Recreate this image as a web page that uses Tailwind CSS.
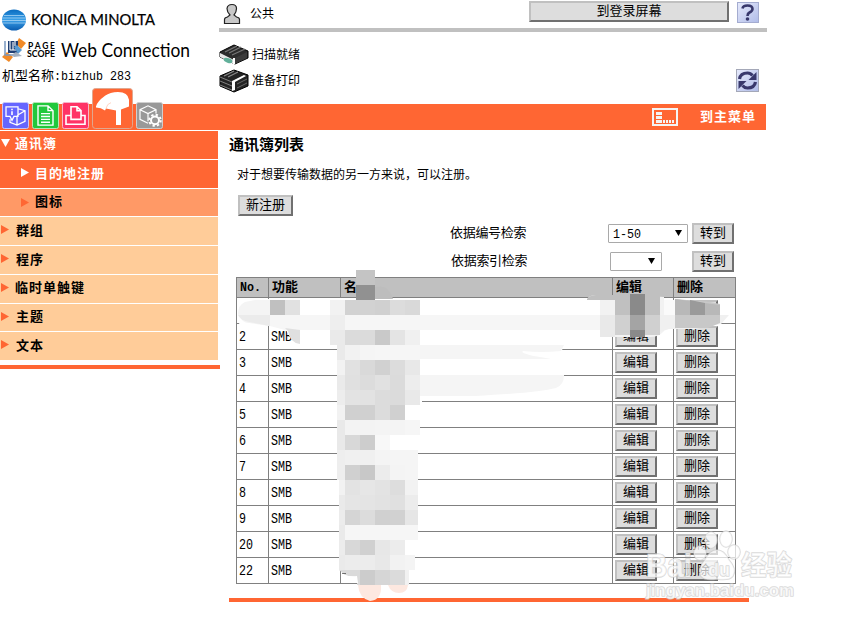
<!DOCTYPE html>
<html lang="zh-CN">
<head>
    <meta charset="UTF-8">
    <meta name="viewport" content="width=device-width, initial-scale=1.0">
    <title>PageScope Web Connection</title>
    <script src="https://cdn.jsdelivr.net/npm/@tailwindcss/browser@4"></script>
</head>
<body class="bg-white text-black font-['Liberation_Mono','Noto_Sans_CJK_SC',monospace] text-[13px] leading-4">
    <div class="relative w-[841px] h-[620px] overflow-hidden">
        <!-- Header -->
        <header class="flex h-[104px] w-[767px]">
            <div class="w-[219px] shrink-0 pt-2">
                <svg class="block" width="219" height="58" viewBox="0 8 219 58">
                    <defs>
                        <linearGradient id="globe" x1="0" y1="0" x2="0" y2="1">
                            <stop offset="0" stop-color="#0a6cc0"/>
                            <stop offset=".5" stop-color="#3aa0e8"/>
                            <stop offset="1" stop-color="#0a5cb0"/>
                        </linearGradient>
                    </defs>
                    <ellipse cx="14" cy="20" rx="12" ry="10.500" fill="url(#globe)"/>
                    <path d="M4 15.500h20M2.500 18h23M2 20.500h24M3 23h22" stroke="#a8d4f4" stroke-width=".8"/>
                    <text x="31" y="25" textLength="124" lengthAdjust="spacingAndGlyphs" font-family="Lato" font-weight="400" font-size="14.500" stroke="#000" stroke-width=".25">KONICA MINOLTA</text>
                    <!-- PageScope mark -->
                    <path d="M19 38l7 5-5 6-5-5z" fill="#f08a28"/>
                    <path d="M2 57l5-5 6 5-4 5z" fill="#f08a28"/>
                    <path d="M5 41v14h13" stroke="#7898c0" stroke-width="1.500" fill="none"/>
                    <path d="M8 41h10v12H8z" fill="#1f3f74"/>
                    <path d="M10 41v9M13 42v8M10 50h6M15 41v5" stroke="#fff" stroke-width="1.100"/>
                    <path d="M14 47l3-2 5 5-4 4z" fill="#5a9ad0"/>
                    <path d="M11 55l5-3 6 4-8 1z" fill="#a4b0c0"/>
                    <text x="28" y="48.500" textLength="27" font-family="Lato" font-weight="700" font-size="8.500">PAGE</text>
                    <text x="27" y="57" textLength="28" lengthAdjust="spacingAndGlyphs" font-family="Lato" font-weight="700" font-size="9.500">SCOPE</text>
                    <text x="61" y="57" textLength="129" lengthAdjust="spacingAndGlyphs" font-family="Lato" font-size="20">Web Connection</text>
                </svg>
                <p class="pl-[2px] pt-[3px] whitespace-nowrap flex items-center"><span>机型名称</span><span class="text-[11.67px] scale-y-[1.15] whitespace-pre">:bizhub 283</span></p>
            </div>

            <div class="w-[548px]">
                <div class="flex h-8 border-b-4 border-[#c0c0c0] items-start">
                    <svg class="mt-[3px] ml-1 shrink-0" width="18" height="22" viewBox="0 0 18 22">
                        <path d="M1.500 20.500v-4q0-2 3-2.500l2.500-2Q4 9 4 5.500 4.500 1.500 9 1.500t4.500 4Q13.500 9 11 12l2.500 2q3 .5 3 2.500v4z" fill="#c8c8c8" stroke="#222" stroke-width="1.200"/>
                    </svg>
                    <p class="ml-[9px] mt-[7px] w-[279px] text-[12px]">公共</p>
                    <button class="w-[200px] h-[21px] mt-px bg-[#dddddd] border-2 border-t-[#c0c0c0] border-l-[#c0c0c0] border-r-[#707070] border-b-[#707070] leading-none">到登录屏幕</button>
                    <svg class="ml-2 mt-[2px] shrink-0" width="22" height="21" viewBox="0 0 22 21">
                        <defs>
                            <linearGradient id="tile" x1="0" y1="0" x2="1" y2="1">
                                <stop offset="0" stop-color="#e6eafc"/>
                                <stop offset="1" stop-color="#b0bce8"/>
                            </linearGradient>
                        </defs>
                        <rect x=".5" y=".5" width="21" height="20" fill="url(#tile)" stroke="#a4acd0"/>
                        <path d="M5.500 6.500Q6 3.500 10.500 3.500q5 0 5 3.500 0 2-3 3.500-2 1-2 3.500" fill="none" stroke="#38386c" stroke-width="2.600"/>
                        <circle cx="10.500" cy="17" r="1.800" fill="#38386c"/>
                    </svg>
                </div>
                <div class="flex justify-between">
                    <div class="pt-[10px] text-[12px]">
                        <div class="flex items-center h-[25px] gap-[3px]">
                            <svg width="30" height="22" viewBox="0 0 30 22">
                                <path d="M1 8L15 1l14 6v7L16 20 1 13z" fill="#2c2c2c" stroke="#000"/>
                                <path d="M6 8l12-6M10 9l12-6M13 11l13-6" stroke="#777" stroke-width="1.200"/>
                                <path d="M1 9l14 7v4L1 13z" fill="#e8e8e8"/>
                                <path d="M16 14l12-6v6l-12 6z" fill="#3a3a3a"/>
                                <path d="M15 14v6" stroke="#fff" stroke-width="2"/>
                                <ellipse cx="9" cy="16.500" rx="4.500" ry="2.300" fill="#62b09a" transform="rotate(18 9 16.500)"/>
                            </svg>
                            <span class="pt-[2px]">扫描就绪</span>
                        </div>
                        <div class="flex items-center h-[27px] gap-[3px]">
                            <svg width="30" height="24" viewBox="0 0 30 24">
                                <path d="M1 7L15 1l14 5v11L15 23 1 17z" fill="#242424" stroke="#000"/>
                                <path d="M5 7l10-5M9 8l10-5" stroke="#8a8a8a" stroke-width="1.200"/>
                                <path d="M1 8l12 5M1 12l12 5M1 16l12 5" stroke="#999" stroke-width=".8"/>
                                <path d="M13 22V12L25 6l2 1-11 6v8z" fill="#fff"/>
                                <path d="M18 15l10-5M18 19l10-5" stroke="#777" stroke-width=".8"/>
                            </svg>
                            <span class="pt-[2px]">准备打印</span>
                        </div>
                    </div>
                    <svg class="mt-[37px] mr-2" width="23" height="23" viewBox="0 0 23 23">
                        <rect x=".5" y=".5" width="22" height="22" fill="url(#tile)" stroke="#a4a8b8"/>
                        <path d="M3.500 10q1-6 8-6 3 0 5 2.500M19.500 13q-1 6-8 6-3 0-5-2.500" fill="none" stroke="#38386c" stroke-width="3.200"/>
                        <path d="M20.500 3v8h-8zM2.500 20v-8h8z" fill="#38386c"/>
                    </svg>
                </div>
            </div>
        </header>

        <!-- Tab strip -->
        <nav class="flex items-end h-[26px] w-[766px] bg-[#ff6633] pl-[2px] pb-px">
            <svg class="shrink-0 mr-[3px]" width="27" height="27" viewBox="0 0 27 28" preserveAspectRatio="none">
                <rect x=".5" y=".5" width="26" height="27" rx="2" fill="#6666ff" stroke="#c8c8f8"/>
                <path d="M4 5h12v10h-4l-2 4-2-4H4zM8 18v3l7 3 8-4V9l-7-2M15 24v-9M15 14l8-5" fill="none" stroke="#fff" stroke-width="1.300"/>
                <path d="M10 7v1.500M10 9.500v4" stroke="#fff" stroke-width="1.600"/>
            </svg>
            <svg class="shrink-0 mr-[3px]" width="27" height="27" viewBox="0 0 27 28" preserveAspectRatio="none">
                <rect x=".5" y=".5" width="26" height="27" rx="2" fill="#22c83c" stroke="#b8e8b8"/>
                <path d="M6 4h10l5 5v15H6zM16 4v5h5M9 12h9M9 15h9M9 18h9M9 21h9" fill="none" stroke="#fff" stroke-width="1.400"/>
            </svg>
            <svg class="shrink-0 mr-[3px]" width="27" height="27" viewBox="0 0 27 28" preserveAspectRatio="none">
                <rect x=".5" y=".5" width="26" height="27" rx="2" fill="#ff3366" stroke="#f8b8cc"/>
                <path d="M9 18V5h6l4 4v9zM15 5v4h4M9 14H4v9h19v-9h-4" fill="none" stroke="#fff" stroke-width="1.600"/>
            </svg>
            <svg class="shrink-0 mr-[3px]" width="41" height="41" viewBox="0 0 41 42" preserveAspectRatio="none">
                <rect x=".5" y=".5" width="40" height="41" rx="3" fill="#ff6633" stroke="#e0a890"/>
                <path d="M4 19Q5 14 13 8q5-4 13-4 10 0 11 8v7l-8 3v16h-5V23l-10-2-1 2q-4-3-9-3z" fill="#fff"/>
                <path d="M14 21q1-5 5-6" fill="none" stroke="#ffc8b4" stroke-width=".8"/>
            </svg>
            <svg class="shrink-0" width="27" height="27" viewBox="0 0 27 28" preserveAspectRatio="none">
                <rect x=".5" y=".5" width="26" height="27" rx="2" fill="#999999" stroke="#d0d0d0"/>
                <path d="M12 22l-8-4V8l8-4 8 4v4M4 8l8 4 8-4M12 12v8" fill="none" stroke="#fff" stroke-width="1.200"/>
                <circle cx="19" cy="19" r="5.800" fill="#999" stroke="#fff" stroke-width="2" stroke-dasharray="2.300 2.250"/>
                <circle cx="19" cy="19" r="4" fill="#999" stroke="#fff" stroke-width="2"/>
            </svg>
            <div class="ml-auto self-center flex items-center pr-[10px]">
                <svg width="26" height="18" viewBox="0 0 26 18">
                    <rect x="1" y="1" width="24" height="16" fill="none" stroke="#f4f4f4" stroke-width="2"/>
                    <path d="M4 4h6v3H4zM4 8h6v3H4zM4 12h6v3H4zM11 12h2v3h-2zM14 12h2v3h-2zM17 12h2v3h-2zM20 12h2v3h-2z" fill="#f4f4f4"/>
                </svg>
                <a class="ml-[22px] pt-[2px] text-white font-bold text-[13px] tracking-[1px] whitespace-nowrap">到主菜单</a>
            </div>
        </nav>

        <div class="flex">
            <!-- Side menu -->
            <aside class="w-[220px] shrink-0 pt-px">
                <ul class="w-[218px] font-bold tracking-[1px]">
                    <li class="flex items-center h-7 mb-px bg-[#ff6633] text-white pl-px"><svg class="mb-1" width="9" height="8"><path d="M0 0h9L4.500 8z" fill="#fff"/></svg><span class="ml-[5px]">通讯簿</span></li>
                    <li class="flex items-center h-7 mb-px bg-[#ff6633] text-white pl-[21px]"><svg class="mb-[3px]" width="8" height="9"><path d="M0 0v9l8-4.500z" fill="#fff"/></svg><span class="ml-[6px] pt-px">目的地注册</span></li>
                    <li class="flex items-center h-[27px] mb-px bg-[#ff9966] pl-[21px]"><svg class="mb-px" width="8" height="9"><path d="M0 0v9l8-4.500z" fill="#ff6633"/></svg><span class="ml-[6px] pt-px">图标</span></li>
                    <li class="flex items-center h-7 mb-px bg-[#ffcc99] pl-px"><svg class="mb-[3px]" width="8" height="9"><path d="M0 0v9l8-4.500z" fill="#ff6633"/></svg><span class="ml-[7px] pt-px">群组</span></li>
                    <li class="flex items-center h-7 mb-px bg-[#ffcc99] pl-px"><svg class="mb-[3px]" width="8" height="9"><path d="M0 0v9l8-4.500z" fill="#ff6633"/></svg><span class="ml-[7px] pt-px">程序</span></li>
                    <li class="flex items-center h-7 mb-px bg-[#ffcc99] pl-px"><svg class="mb-[3px]" width="8" height="9"><path d="M0 0v9l8-4.500z" fill="#ff6633"/></svg><span class="ml-[6px]">临时单触键</span></li>
                    <li class="flex items-center h-[27px] mb-px bg-[#ffcc99] pl-px"><svg class="mb-[3px]" width="8" height="9"><path d="M0 0v9l8-4.500z" fill="#ff6633"/></svg><span class="ml-[7px] pt-px">主题</span></li>
                    <li class="flex items-center h-7 bg-[#ffcc99] pl-px"><svg class="mb-[3px]" width="8" height="9"><path d="M0 0v9l8-4.500z" fill="#ff6633"/></svg><span class="ml-[7px] pt-px">文本</span></li>
                </ul>
                <div class="mt-[5px] h-1 bg-[#ff6633]"></div>
            </aside>

            <!-- Address book -->
            <main class="w-[529px] pl-[9px] pt-[9px]">
                <h1 class="font-bold text-[15px]">通讯簿列表</h1>
                <p class="mt-[13px] ml-2 text-[12px]">对于想要传输数据的另一方来说，可以注册。</p>
                <button class="block ml-[9px] mt-[11px] w-[55px] h-[21px] bg-[#dddddd] border-2 border-t-[#c0c0c0] border-l-[#c0c0c0] border-r-[#707070] border-b-[#707070] leading-none">新注册</button>
                <div class="flex items-center h-[28px] mt-[3px] ml-[221px]">
                    <span class="w-[158px] pt-[2px] tracking-[-0.3px]">依据编号检索</span>
                    <div class="flex items-center justify-between w-20 h-[19px] border border-[#a9a9a9] rounded-[1px] pl-1 pr-[5px] text-[11.67px]"><span class="pt-px scale-y-[1.15]">1-50</span><svg width="7" height="6"><path d="M0 0h7L3.500 6z"/></svg></div>
                    <button class="ml-1 w-[42px] h-[21px] bg-[#dddddd] border-2 border-t-[#c0c0c0] border-l-[#c0c0c0] border-r-[#707070] border-b-[#707070] leading-none">转到</button>
                </div>
                <div class="flex items-center h-[28px] ml-[222px]">
                    <span class="w-[159px] pt-[2px] tracking-[-0.3px]">依据索引检索</span>
                    <div class="flex items-center justify-end w-[52px] h-[19px] border border-[#a9a9a9] rounded-[1px] pr-[6px]"><svg width="7" height="6"><path d="M0 0h7L3.500 6z"/></svg></div>
                    <button class="ml-[30px] w-[42px] h-[21px] bg-[#dddddd] border-2 border-t-[#c0c0c0] border-l-[#c0c0c0] border-r-[#707070] border-b-[#707070] leading-none">转到</button>
                </div>

                <div class="ml-[7px] mt-[2px] w-[500px] bg-[#808080] p-px grid gap-px">
                    <div class="grid grid-cols-[31px_71px_271px_60px_61px] gap-px h-[19px] font-bold *:bg-[#c0c0c0] *:pl-[3px] *:pt-[2px] *:overflow-hidden">
                        <div class="text-[11.67px]"><span class="inline-block scale-y-[1.15]">No.</span></div><div>功能</div><div>名称</div><div>编辑</div><div>删除</div>
                    </div>
                    <div id="addressList" class="grid gap-px"></div>
                </div>
                <div class="mt-[14px] w-[520px] h-1 bg-[#ff6633]"></div>
            </main>
        </div>

        <!-- Censored names -->
        <svg class="absolute left-0 top-0" width="841" height="620" viewBox="0 0 841 620">
            <path d="M258 299h162v46h-50l-33 3q-20-3-34-3l-8-1-10-15-17-4h-30z" fill="#fff"/>
            <path d="M337 298h275v39l-20 7h-25l-6 7h3v27q0 8-20 10l-67 7h-55v10h-83z" fill="#fff"/>
            <path d="M245 302q-7 3-7 12 4 9 11 9l20 3h1V300h-15z" fill="#f4f4f4"/>
            <path d="M238 315h32v11l-21-4q-9-2-11-7z" fill="#ebebeb"/>
            <path d="M270 315h345v15H285l-15-4z" fill="#f6f6f6"/>
            <path d="M285 328l3 3q2 12 12 13v-14z" fill="#e0e0e0"/>
            <path d="M405 345h159l-3 6q-20 2-38 0-5 3 28 8H405zM420 375h144q0 10-8 13-20 5-81 8h-55z" fill="#f5f5f5"/>
            <path d="M356 270h19v15h-19z" fill="#c4c4c4"/>
            <path d="M356 285h19v15h-19z" fill="#919191"/>
            <path d="M375 287q14-3 18 12h-18z" fill="#bdbdbd"/>
            <path d="M270 300h15v15h-15z" fill="#c0c0c0"/>
            <path d="M285 300h15v15h-15z" fill="#e1e1e1"/>
            <g id="mosaic"></g>
            <path d="M339 570h21v15h-3v-8l-9-1-3-1z" fill="#dadada"/>
            <path d="M341 574l4 1q5 2 12 1l1 7h-17z" fill="#fff"/>
            <path d="M343 573v1M345 573v1" stroke="#000"/>
            <path d="M358 585h23q1 15-11 16-11-3-12-16zM388 585h20q-1 8-9 8t-11-8z" fill="#fde8e0"/>
            <!-- smudge over the first row's buttons -->
            <path d="M587 299q3-4 9-4h32l36 2v34q-5 6-14 6h-50v-38z" fill="#f2f2f2"/>
            <path d="M664 300h11v15h-11z" fill="#fafafa"/>
            <path d="M587 299q3-4 9-4h19v5h-28z" fill="#c0c0c0"/>
            <path d="M600 315h15v22h-15z" fill="#e9e9e9"/>
            <path d="M615 294h15v21h-15zM645 295h15v20h-15z" fill="#c0c0c0"/>
            <path d="M615 315h15v20h-15zM645 315h15v20h-15z" fill="#d0d0d0"/>
            <path d="M630 294h15v21h-15zM630 330h15v7h-15z" fill="#8a8a8a"/>
            <path d="M630 315h15v15h-15z" fill="#a4a4a4"/>
            <path d="M660 315h69l-8 9-26 5h-26l-9 3z" fill="#f0f0f0"/>
            <path d="M675 299l35 3 10 2v19l-12 5h-33z" fill="#c8c8c8"/>
            <path d="M675 299l15 2v14h-15zM705 303l15 2v10h-15z" fill="#b8b8b8"/>
            <path d="M690 300l15 3v12h-15z" fill="#9a9a9a"/>
        </svg>

        <!-- Watermark -->
        <svg class="absolute left-[640px] top-[525px]" width="170" height="80" viewBox="0 0 170 80">
            <g fill="#fff" fill-opacity=".7" stroke="#c8c8c8" stroke-opacity=".7" stroke-width="1.500" stroke-linejoin="round" paint-order="stroke">
                <ellipse cx="71" cy="15" rx="6" ry="8"/>
                <ellipse cx="86" cy="14" rx="6" ry="8"/>
                <ellipse cx="60" cy="28" rx="6" ry="7"/>
                <ellipse cx="94" cy="27" rx="6" ry="7"/>
                <path d="M77 25q7 0 12 10 8 9 4 16-4 5-16 3-12 2-16-3-4-7 4-16 5-10 12-10z"/>
                <text x="6" y="52" textLength="46" lengthAdjust="spacingAndGlyphs" font-family="Liberation Sans" font-weight="700" font-size="33">Bai</text>
                <text x="68" y="51" textLength="22" lengthAdjust="spacingAndGlyphs" font-family="Liberation Sans" font-weight="700" font-size="18">du</text>
                <text x="101" y="50" textLength="51" lengthAdjust="spacingAndGlyphs" font-family="Noto Sans CJK SC" font-weight="700" font-size="27">经验</text>
                <text x="6" y="71" textLength="148" lengthAdjust="spacingAndGlyphs" font-family="Liberation Sans" font-weight="700" font-size="16">jingyan.baidu.com</text>
            </g>
        </svg>
    </div>

    <script>
        // First row is fully covered
        const rows = ['', '2', '3', '4', '5', '6', '7', '8', '9', '20', '22'];
        const button = 'block w-[42px] h-[21px] bg-[#dddddd] border-2 border-t-[#c0c0c0] border-l-[#c0c0c0] border-r-[#707070] border-b-[#707070] leading-none';

        document.getElementById('addressList').innerHTML = rows.map(no => `
            <div class="grid grid-cols-[31px_71px_271px_60px_61px] gap-px h-[25px] text-[11.67px] *:bg-white *:pl-[2px] *:flex *:items-center">
                <div><span class="scale-y-[1.2]">${no}</span></div>
                <div><span class="scale-y-[1.2]">${no ? 'SMB' : ''}</span></div>
                <div></div>
                <div><button class="${button} text-[13px]">${no ? '编辑' : ''}</button></div>
                <div><button class="${button} text-[13px]">${no ? '删除' : ''}</button></div>
            </div>
        `).join('');

        // Grey levels of the 15px blocks, one line per block row from y=300
        const blocks = [
            'f2 d2 d2 d0 dc d9',
            'ee f6 f6 f6 f6 f6',
            'ea db db c9 e4 f0',
            'ea f2 f5 f6 f6 f6',
            'f2 e1 d9 d1 dc e8',
            'ea e0 dc e1 db ed',
            'ed e3 e2 dc db e9',
            'f2 d0 d0 dc d0 ff',
            'e9 f3 f3 f4 f4 f6',
            'e9 d8 cd f8 ff ff',
            'ee f0 f0 f4 f5 f5',
            'ee d0 c8 ec f4 f5',
            'f2 e3 e6 e3 dd f2',
            'ea e5 e4 e2 e0 ec',
            'ec d5 dc d0 d1 e6',
            'ea f6 f6 f6 f6 f6',
            'ec d8 d0 e7 ec ff',
            'ea ec ec e8 f2 f4',
            'ff ff cc d6 db f1'
        ];
        document.getElementById('mosaic').innerHTML = blocks.map((line, r) =>
            line.split(' ').map((g, c) => {
                if (r === 18 && c < 2) return '';
                let x = c ? 330 + c * 15 : (r < 3 ? 330 : r < 12 ? 337 : 339);
                let w = c ? 15 : 345 - x;
                if (c === 5 && r > 9) w = r > 16 ? (r > 17 ? 4 : 10) : 13;
                return `<rect x="${x}" y="${300 + r * 15}" width="${w}" height="15" fill="#${g}${g}${g}"/>`;
            }).join('')
        ).join('');
    </script>
</body>
</html>
